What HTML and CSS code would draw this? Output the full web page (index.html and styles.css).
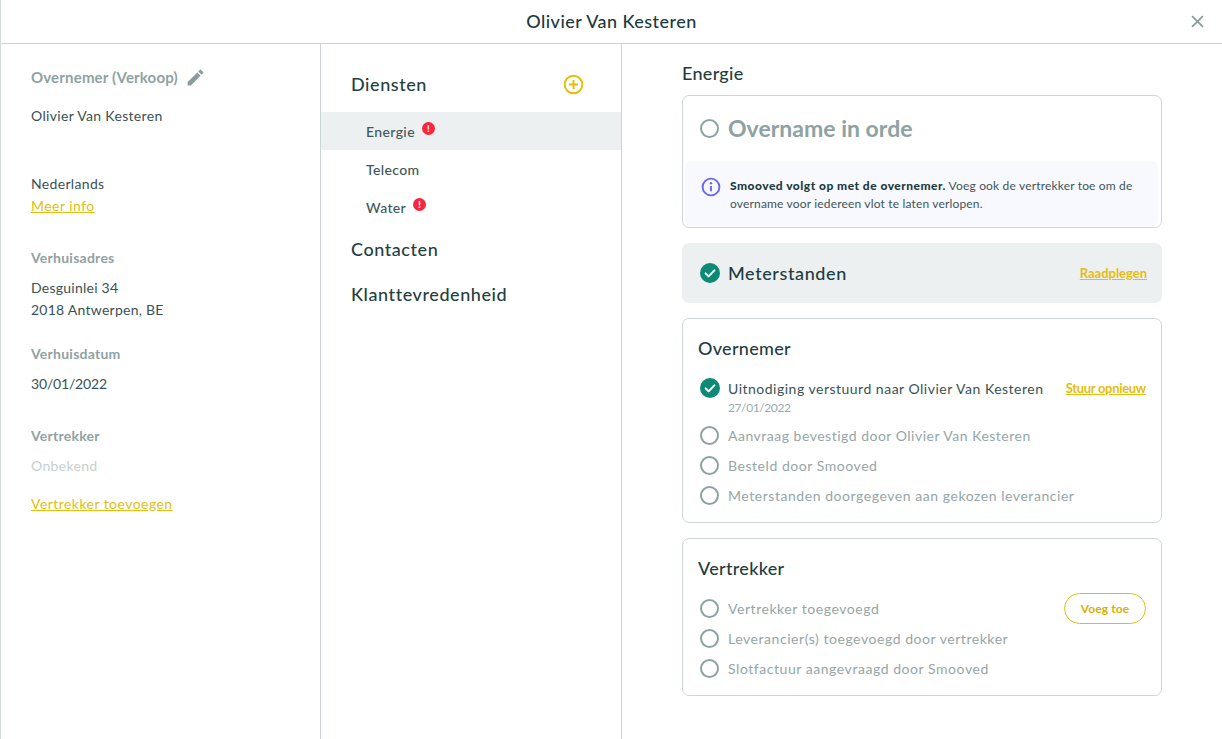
FILE: index.html
```html
<!DOCTYPE html>
<html lang="nl">
<head>
<meta charset="utf-8">
<title>Olivier Van Kesteren</title>
<link rel="stylesheet" href="styles.css">
</head>
<body>
<div class="modal">
  <header class="top">
    <h1 class="top-title">Olivier Van Kesteren</h1>
    <svg class="close" viewBox="0 0 12 12"><path d="M1 1l10 10M11 1L1 11"/></svg>
  </header>
  <div class="cols">
    <aside class="info">
      <div class="label-row">
        <span class="label head-label">Overnemer (Verkoop)</span>
        <svg class="pencil" viewBox="0 0 24 24"><path d="M3 17.25V21h3.75L17.81 9.94l-3.75-3.75L3 17.25zM20.71 7.04a1 1 0 0 0 0-1.41l-2.34-2.34a1 1 0 0 0-1.41 0l-1.83 1.83 3.75 3.75 1.83-1.83z"/></svg>
      </div>
      <p class="val name">Olivier Van Kesteren</p>
      <p class="val lang">Nederlands</p>
      <a class="link more">Meer info</a>
      <div class="label addr-l">Verhuisadres</div>
      <p class="val addr">Desguinlei 34<br>2018 Antwerpen, BE</p>
      <div class="label date-l">Verhuisdatum</div>
      <p class="val date">30/01/2022</p>
      <div class="label vert-l">Vertrekker</div>
      <p class="val unknown">Onbekend</p>
      <a class="link add">Vertrekker toevoegen</a>
    </aside>
    <nav class="menu">
      <div class="menu-head">
        <span class="menu-title">Diensten</span>
        <svg class="plus" viewBox="0 0 20 20"><circle cx="10" cy="10" r="8.4"/><path d="M10 5.6v8.8M5.6 10h8.8"/></svg>
      </div>
      <div class="sub active">Energie<span class="alert">!</span></div>
      <div class="sub">Telecom</div>
      <div class="sub">Water<span class="alert">!</span></div>
      <div class="menu-title sec contact">Contacten</div>
      <div class="menu-title sec">Klanttevredenheid</div>
    </nav>
    <main class="detail">
      <h2 class="detail-title">Energie</h2>
      <section class="card first">
        <div class="first-head">
          <span class="ring big"></span>
          <span class="first-title">Overname in orde</span>
        </div>
        <div class="note">
          <svg class="info-i" viewBox="0 0 20 20"><circle cx="10" cy="10" r="8.4"/><path d="M10 9v5.2"/><circle class="dot" cx="10" cy="6.2" r="1.2"/></svg>
          <p class="note-text"><b>Smooved volgt op met de overnemer.</b> Voeg ook de vertrekker toe om de overname voor iedereen vlot te laten verlopen.</p>
        </div>
      </section>
      <section class="meter">
        <svg class="check" viewBox="0 0 20 20"><circle cx="10" cy="10" r="10"/><path d="M5.6 10.4l3 3 5.8-6"/></svg>
        <span class="meter-title">Meterstanden</span>
        <a class="link small end raad">Raadplegen</a>
      </section>
      <section class="card steps buyer">
        <h3 class="card-title">Overnemer</h3>
        <div class="step done">
          <svg class="check" viewBox="0 0 20 20"><circle cx="10" cy="10" r="10"/><path d="M5.6 10.4l3 3 5.8-6"/></svg>
          <span>Uitnodiging verstuurd naar Olivier Van Kesteren</span>
          <a class="link small end again">Stuur opnieuw</a>
        </div>
        <div class="step-date">27/01/2022</div>
        <div class="step tight"><span class="ring"></span><span>Aanvraag bevestigd door Olivier Van Kesteren</span></div>
        <div class="step"><span class="ring"></span><span>Besteld door Smooved</span></div>
        <div class="step"><span class="ring"></span><span>Meterstanden doorgegeven aan gekozen leverancier</span></div>
      </section>
      <section class="card steps seller">
        <h3 class="card-title">Vertrekker</h3>
        <div class="step"><span class="ring"></span><span>Vertrekker toegevoegd</span><a class="pill end">Voeg toe</a></div>
        <div class="step"><span class="ring"></span><span>Leverancier(s) toegevoegd door vertrekker</span></div>
        <div class="step"><span class="ring"></span><span>Slotfactuur aangevraagd door Smooved</span></div>
      </section>
    </main>
  </div>
</div>
</body>
</html>
```

FILE: styles.css
```css
* { box-sizing: border-box; }
html, body { margin: 0; height: 100%; background: #fff; }
body { font-family: Lato, "Open Sans", sans-serif; color: #2f4a4c; overflow: hidden; }
h1, h2, h3, p { margin: 0; font-weight: 400; }
.modal { height: 739px; display: flex; flex-direction: column; border-left: 1px solid #d3dada; }
.top { height: 44px; flex: none; border-bottom: 1px solid #ccd5d5; display: flex; align-items: center; justify-content: center; position: relative; padding-bottom: 2px; }
.top-title { font-size: 18px; letter-spacing: .45px; color: #1c3a3d; font-weight: 500; }
.close { position: absolute; right: 18px; top: 15px; width: 13px; height: 13px; fill: none; stroke: #8b9c9d; stroke-width: 1.6; }
.cols { flex: 1; display: flex; min-height: 0; }
.info { width: 320px; flex: none; border-right: 1px solid #ccd5d5; padding: 23px 30px 0; display: flex; flex-direction: column; align-items: flex-start; }
.label { font-size: 14px; font-weight: 700; color: #8fa2a3; letter-spacing: .25px; line-height: 20px; }
.head-label { font-size: 15px; letter-spacing: .17px; }
.label-row { display: flex; align-items: center; gap: 7px; height: 20px; }
.pencil { width: 21px; height: 21px; fill: #8a9c9d; }
.val { font-size: 14px; line-height: 22px; letter-spacing: .33px; color: #3a5254; }
.name { margin-top: 18px; }
.lang { margin-top: 46px; }
.link { color: #e6bd0e; text-decoration: underline; }
.more, .add { font-size: 14px; line-height: 22px; letter-spacing: .45px; }
.addr-l { margin-top: 31px; }
.addr { margin-top: 9px; letter-spacing: .25px; }
.date-l { margin-top: 23px; }
.date { margin-top: 9px; letter-spacing: -.18px; }
.vert-l { margin-top: 31px; }
.unknown { margin-top: 9px; color: #c6d0d0; }
.add { margin-top: 16px; }
.menu { width: 301px; flex: none; border-right: 1px solid #ccd5d5; padding-top: 25px; }
.menu-head { display: flex; align-items: center; justify-content: space-between; padding: 0 37px 0 30px; height: 30px; margin-bottom: 13px; }
.menu-title { font-size: 18px; font-weight: 500; color: #23403f; letter-spacing: .57px; line-height: 30px; }
.plus { width: 21px; height: 21px; fill: none; stroke: #e6bd0e; stroke-width: 1.9; }
.sub { height: 38px; display: flex; align-items: center; padding-left: 45px; font-size: 14px; font-weight: 500; letter-spacing: .38px; color: #3f5759; }
.sub.active { background: #ecf0f0; }
.alert { width: 13px; height: 13px; border-radius: 50%; background: #f4283e; color: #fff; font-size: 9px; font-weight: 900; line-height: 13px; text-align: center; margin: -5px 0 0 7px; }
.sec { padding-left: 30px; }
.contact { margin-top: 8px; margin-bottom: 15px; }
.detail { flex: 1; padding: 17px 60px 0; min-width: 0; }
.detail-title { font-size: 18px; font-weight: 500; letter-spacing: .3px; color: #1f3c3e; line-height: 24px; margin-bottom: 10px; }
.card { border: 1px solid #ccd8d8; border-radius: 7px; background: #fff; }
.first { height: 133px; padding: 2px; }
.first-head { height: 60px; margin-bottom: 3px; display: flex; align-items: center; padding-left: 15px; gap: 9px; }
.first-title { font-size: 23px; font-weight: 700; color: #8fa2a3; letter-spacing: .02px; }
.note { background: #f8f9fe; border-radius: 6px; height: 65px; display: flex; align-items: flex-start; padding: 16px 14px 0 16px; gap: 9px; margin-right: 1px; }
.info-i { width: 20px; height: 20px; flex: none; fill: none; stroke: #6b66f5; stroke-width: 1.9; }
.info-i .dot { fill: #6b66f5; stroke: none; }
.note-text { font-size: 12px; line-height: 18px; color: #3e5557; letter-spacing: .17px; }
.note-text b { font-weight: 900; color: #1f3c3e; letter-spacing: .48px; }
.meter { height: 60px; margin-top: 15px; background: #ecf0f0; border-radius: 7px; display: flex; align-items: center; padding: 0 15px 0 18px; }
.check { width: 20px; height: 20px; flex: none; }
.check circle { fill: #0c8a75; }
.check path { fill: none; stroke: #fff; stroke-width: 2; stroke-linecap: round; stroke-linejoin: round; }
.meter-title { font-size: 18px; font-weight: 500; letter-spacing: .6px; color: #1f3c3e; margin-left: 8px; }
.end { margin-left: auto; }
.small { font-size: 13px; font-weight: 700; line-height: 16px; }
.raad { letter-spacing: -.02px; }
.again { letter-spacing: -.3px; }
.steps { margin-top: 15px; padding: 18px 15px 0; }
.buyer { height: 205px; }
.seller { height: 158px; }
.card-title { font-size: 18px; font-weight: 500; letter-spacing: .3px; color: #1f3c3e; line-height: 22px; margin-bottom: 14px; }
.buyer .card-title { margin-bottom: 19px; }
.step { height: 30px; display: flex; align-items: center; gap: 9px; font-size: 14px; letter-spacing: .55px; color: #95a6a7; padding-left: 2px; }
.step.done { height: 20px; gap: 8px; color: #3a5254; letter-spacing: .5px; }
.step.tight { letter-spacing: .5px; }
.step-date { font-size: 12px; line-height: 18px; padding: 1px 0 0 30px; color: #9aaaab; letter-spacing: -.4px; height: 22px; }
.ring { width: 19px; height: 19px; flex: none; border: 2px solid #8fa2a3; border-radius: 50%; }
.pill { height: 31px; width: 82px; border: 1px solid #e6bd0e; border-radius: 16px; color: #d9b000; font-size: 12px; font-weight: 700; display: flex; align-items: center; justify-content: center; letter-spacing: .1px; }
```
